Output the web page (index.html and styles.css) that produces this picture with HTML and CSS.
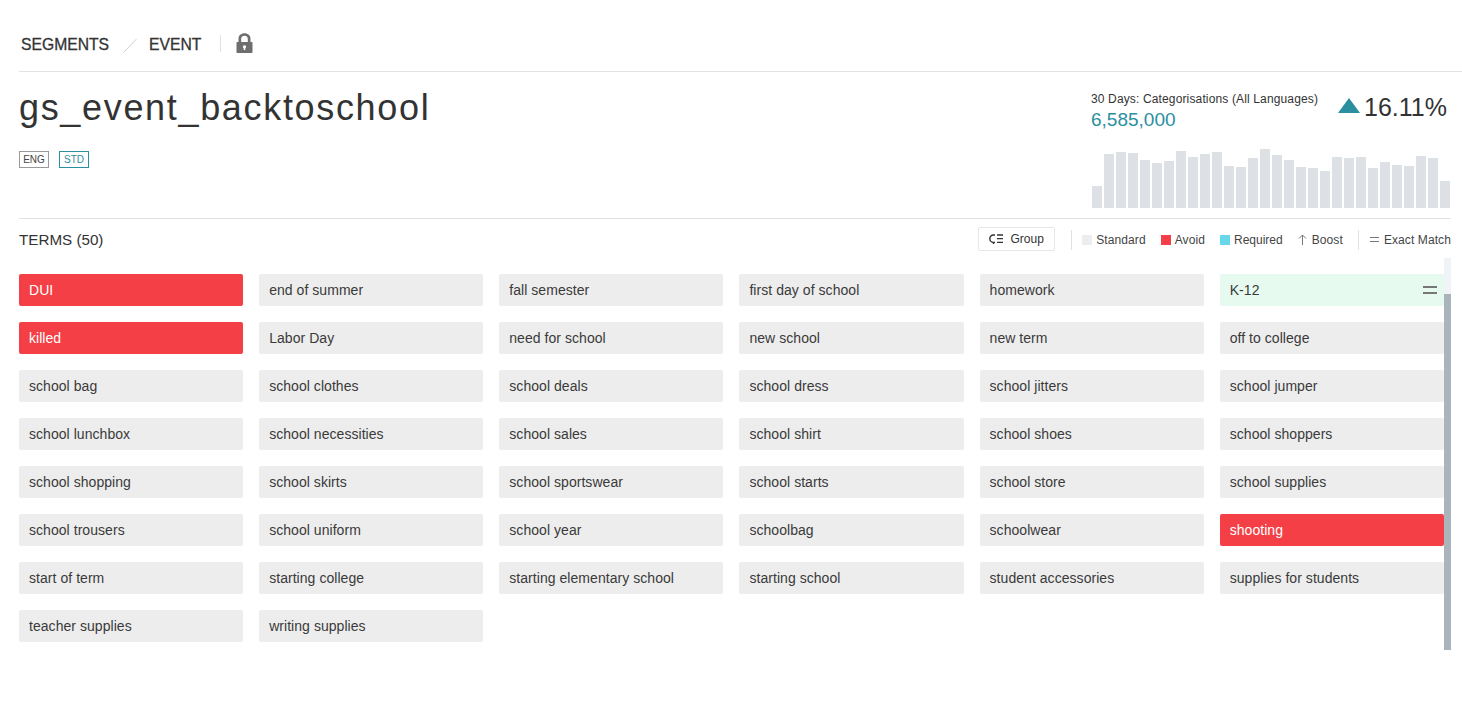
FILE: index.html
```html
<!DOCTYPE html>
<html lang="en">
<head>
<meta charset="utf-8">
<title>gs_event_backtoschool</title>
<link rel="stylesheet" href="styles.css">
</head>
<body>
<div class="page">
  <nav class="crumbs">
    <span class="crumb">SEGMENTS</span>
    <svg class="slash" width="16" height="16" viewBox="0 0 16 16"><path d="M1.500 15.500 14.500 2" stroke="#d0d0d0" stroke-width="1" fill="none"/></svg>
    <span class="crumb">EVENT</span>
    <span class="crumb-div"></span>
    <svg class="lock" width="17" height="20" viewBox="0 0 17 20"><path fill="#6e6e6e" fill-rule="evenodd" d="M2.500 9V5.800C2.500 2.600 5 .3 8.500.3s6 2.300 6 5.500V9h1c.6 0 1 .4 1 1v9c0 .6-.4 1-1 1h-14c-.6 0-1-.4-1-1v-9c0-.6.4-1 1-1h1Zm2.700 0h6.600V5.800c0-1.900-1.400-3-3.300-3s-3.300 1.100-3.300 3V9Zm3.300 3.200a1.600 1.600 0 0 0-.8 3V17h1.600v-1.800a1.600 1.600 0 0 0-.8-3Z"/></svg>
  </nav>
  <header class="summary">
    <div class="summary-main">
      <h1 class="title">gs_event_backtoschool</h1>
      <div class="tags">
        <span class="tag">ENG</span>
        <span class="tag tag-teal">STD</span>
      </div>
    </div>
    <div class="stats">
      <div class="stats-top">
        <div>
          <div class="stats-label">30 Days: Categorisations (All Languages)</div>
          <div class="stats-value">6,585,000</div>
        </div>
        <div class="delta">
          <span class="triangle"></span>
          <span class="delta-value">16.11%</span>
        </div>
      </div>
      <div class="bars">
        <i style="height:22px"></i><i style="height:54px"></i><i style="height:56px"></i><i style="height:55px"></i><i style="height:48px"></i><i style="height:45px"></i><i style="height:47px"></i><i style="height:57px"></i><i style="height:51px"></i><i style="height:54px"></i><i style="height:56px"></i><i style="height:42px"></i><i style="height:41px"></i><i style="height:50px"></i><i style="height:59px"></i><i style="height:53px"></i><i style="height:48px"></i><i style="height:41px"></i><i style="height:40px"></i><i style="height:37px"></i><i style="height:51px"></i><i style="height:50px"></i><i style="height:51px"></i><i style="height:40px"></i><i style="height:46px"></i><i style="height:43px"></i><i style="height:42px"></i><i style="height:52px"></i><i style="height:50px"></i><i style="height:27px"></i>
      </div>
    </div>
  </header>
  <section class="terms">
    <div class="terms-head">
      <h2 class="terms-title">TERMS (50)</h2>
      <div class="legend">
        <button class="group-btn" type="button">
          <svg width="14" height="10" viewBox="0 0 14 10"><path d="M6 1H4.500a3.700 3.700 0 0 0 0 7.400H6M4.500 8.400v1.600" stroke="#333" stroke-width="1.400" fill="none"/><path d="M8 1h6M8 4.700h6M8 8.400h6" stroke="#333" stroke-width="1.300" fill="none"/></svg>
          Group
        </button>
        <span class="legend-div"></span>
        <span class="legend-item item-standard"><span class="swatch swatch-standard"></span>Standard</span>
        <span class="legend-item item-avoid"><span class="swatch swatch-avoid"></span>Avoid</span>
        <span class="legend-item item-required"><span class="swatch swatch-required"></span>Required</span>
        <span class="legend-item item-boost"><svg width="9" height="11" viewBox="0 0 9 11"><path d="M4.500 11V1M1 4.500 4.500 1 8 4.500" stroke="#777" stroke-width="1" fill="none"/></svg>Boost</span>
        <span class="legend-div legend-div-2"></span>
        <span class="legend-item item-exact"><span class="eq"></span>Exact Match</span>
      </div>
    </div>
    <div class="scroller">
      <div class="grid">
        <div class="chip chip-red">DUI</div>
        <div class="chip">end of summer</div>
        <div class="chip">fall semester</div>
        <div class="chip">first day of school</div>
        <div class="chip">homework</div>
        <div class="chip chip-green">K-12<span class="chip-eq"></span></div>
        <div class="chip chip-red">killed</div>
        <div class="chip">Labor Day</div>
        <div class="chip">need for school</div>
        <div class="chip">new school</div>
        <div class="chip">new term</div>
        <div class="chip">off to college</div>
        <div class="chip">school bag</div>
        <div class="chip">school clothes</div>
        <div class="chip">school deals</div>
        <div class="chip">school dress</div>
        <div class="chip">school jitters</div>
        <div class="chip">school jumper</div>
        <div class="chip">school lunchbox</div>
        <div class="chip">school necessities</div>
        <div class="chip">school sales</div>
        <div class="chip">school shirt</div>
        <div class="chip">school shoes</div>
        <div class="chip">school shoppers</div>
        <div class="chip">school shopping</div>
        <div class="chip">school skirts</div>
        <div class="chip">school sportswear</div>
        <div class="chip">school starts</div>
        <div class="chip">school store</div>
        <div class="chip">school supplies</div>
        <div class="chip">school trousers</div>
        <div class="chip">school uniform</div>
        <div class="chip">school year</div>
        <div class="chip">schoolbag</div>
        <div class="chip">schoolwear</div>
        <div class="chip chip-red">shooting</div>
        <div class="chip">start of term</div>
        <div class="chip">starting college</div>
        <div class="chip">starting elementary school</div>
        <div class="chip">starting school</div>
        <div class="chip">student accessories</div>
        <div class="chip">supplies for students</div>
        <div class="chip">teacher supplies</div>
        <div class="chip">writing supplies</div>
      </div>
      <div class="scrollbar"><div class="thumb"></div></div>
    </div>
  </section>
</div>
</body>
</html>
```

FILE: styles.css
```css
* { box-sizing: border-box; }
html, body { margin: 0; padding: 0; background: #fff; }
body {
  font-family: "Liberation Sans", Arial, sans-serif;
  color: #333;
  overflow: hidden;
}
.page { padding-left: 19px; height: 726px; }

.crumbs {
  height: 72px;
  padding: 32px 0 0 2px;
  display: flex;
  align-items: flex-start;
  border-bottom: 1px solid #e2e2e2;
}
.crumb { font-size: 15.7px; line-height: 26px; color: #333; -webkit-text-stroke: 0.3px #333; }
.slash { margin: 5px 11px 0 13px; }
.crumb-div { width: 1px; height: 17px; background: #e2e2e2; margin: 3px 15px 0 19px; }
.lock { margin-top: 1px; }

.summary {
  height: 147px;
  width: 1432px;
  display: flex;
  justify-content: space-between;
  border-bottom: 1px solid #e2e2e2;
}
.title {
  margin: 13px 0 0;
  font-size: 36px;
  line-height: 46px;
  font-weight: 400;
  letter-spacing: 1.67px;
  color: #333;
}
.tags { display: flex; gap: 10px; margin-top: 20px; }
.tag {
  width: 30px;
  height: 17px;
  border: 1px solid #999;
  font-size: 10px;
  line-height: 15px;
  text-align: center;
  color: #444;
}
.tag-teal { border-color: #2b8f9f; color: #2b8f9f; }

.stats { width: 360px; padding-top: 20px; }
.stats-top { display: flex; justify-content: space-between; padding-right: 4px; }
.stats-label { font-size: 12px; line-height: 14px; letter-spacing: 0.14px; color: #333; }
.stats-value { font-size: 19px; line-height: 22px; margin-top: 3px; color: #2b8f9f; }
.delta { display: flex; align-items: flex-start; gap: 4px; }
.triangle {
  width: 0; height: 0;
  margin-top: 6px;
  border-left: 11px solid transparent;
  border-right: 11px solid transparent;
  border-bottom: 15px solid #2b8f9f;
}
.delta-value { font-size: 25px; line-height: 30px; color: #333; }
.bars {
  margin-top: 17px;
  height: 60px;
  display: flex;
  align-items: flex-end;
  gap: 2px;
  padding-left: 1px;
}
.bars i { display: block; width: 10px; background: #dde0e4; }

.terms { width: 1432px; }
.terms-head {
  height: 39px;
  display: flex;
  justify-content: space-between;
  align-items: center;
  padding-top: 2px;
}
.terms-title { margin: 0; font-size: 15.2px; font-weight: 400; color: #333; }
.legend { display: flex; align-items: center; font-size: 12px; letter-spacing: 0.1px; color: #444; }
.group-btn {
  width: 77px;
  height: 24px;
  display: flex;
  align-items: center;
  justify-content: center;
  gap: 7px;
  padding: 0;
  background: #fff;
  border: 1px solid #e6e6e6;
  border-radius: 2px;
  font: 12px "Liberation Sans", Arial, sans-serif;
  color: #333;
  margin-bottom: 2px;
}
.legend-div { width: 1px; height: 20px; background: #e2e2e2; margin: 0 10px 0 16px; }
.legend-div-2 { margin: 0 11px 0 15px; }
.legend-item { display: flex; align-items: center; gap: 4px; }
.item-exact { gap: 5px; }
.item-boost { gap: 5px; }
.item-standard { margin-right: 15px; }
.item-avoid { margin-right: 15px; }
.item-required { margin-right: 15px; letter-spacing: 0; }
.swatch { width: 10px; height: 10px; display: block; }
.swatch-standard { background: #ededed; }
.swatch-avoid { background: #f43f46; }
.swatch-required { background: #66d8ea; }
.eq {
  width: 9px;
  height: 5px;
  border-top: 1px solid #777;
  border-bottom: 1px solid #777;
}

.scroller {
  height: 392px;
  display: flex;
  align-items: flex-start;
}
.grid {
  width: 1425px;
  padding-top: 16px;
  display: grid;
  grid-template-columns: repeat(6, 224.1px);
  column-gap: 16.05px;
  row-gap: 16px;
}
.chip {
  height: 32px;
  padding-left: 10px;
  display: flex;
  align-items: center;
  justify-content: space-between;
  background: #ededed;
  border-radius: 2px;
  font-size: 14px;
  letter-spacing: 0.05px;
  color: #3a3a3a;
}
.chip-red { background: #f43f46; color: #fff; }
.chip-green { background: #e7faef; padding-right: 7px; }
.chip-eq {
  width: 14px;
  height: 8px;
  border-top: 2px solid #777;
  border-bottom: 2px solid #777;
}
.scrollbar { width: 7px; height: 392px; background: #f1f4f6; }
.thumb { margin-top: 36px; height: 356px; background: #a9b5bb; }
```
